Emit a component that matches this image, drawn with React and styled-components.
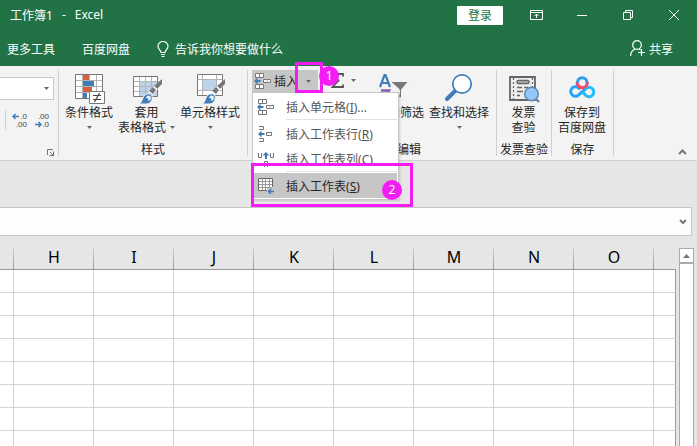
import React, { useState } from "react";
import styled, { createGlobalStyle, css } from "styled-components";

const green = "#217346";
const grey = "#777777";
const blue = "#3f7cb8";
const pink = "#f31cf3";

const COLUMNS = ["H", "I", "J", "K", "L", "M", "N", "O"];
const ROWS = [1, 2, 3, 4, 5, 6, 7, 8];

const GlobalStyle = createGlobalStyle`
  * {
    box-sizing: border-box;
  }
  body {
    margin: 0;
    overflow: hidden;
    font-family: "Noto Sans", "Noto Sans CJK SC", sans-serif;
    font-size: 12px;
  }
  button, select {
    margin: 0;
    padding: 0;
    border: none;
    background: none;
    color: inherit;
    font: inherit;
  }
  svg {
    display: block;
    flex: none;
  }
`;

/* ---------- icons ---------- */

const Arrow = () => (
  <svg width="5" height="3" viewBox="0 0 5 3" aria-hidden="true">
    <path d="M0 0h5L2.500 3z" fill="#666" />
  </svg>
);

const BulbIcon = () => (
  <svg width="12" height="16" viewBox="0 0 12 16" fill="none" stroke="#fff">
    <path d="M4 11.500C4 9 1 8.500 1 5.300a5 4.800 0 0 1 10 0C11 8.500 8 9 8 11.500z" strokeWidth="1.200" />
    <path d="M4 13.500h4M4.500 15.500h3" />
  </svg>
);

const ShareIcon = () => (
  <svg width="16" height="17" viewBox="0 0 16 17" fill="none" stroke="#fff" strokeWidth="1.200">
    <circle cx="7" cy="5" r="4.300" />
    <path d="M.6 16c0-3.500 1.700-5.700 4.400-6.700M9 9l1.500 1" />
    <path d="M8 12.500h7M11.500 9v7" />
  </svg>
);

const RibbonModeIcon = () => (
  <svg width="13" height="10" viewBox="0 0 13 10" fill="none" stroke="#fff">
    <path d="M.5.5h12v9H.5zM1 2.500h11M6.500 8V4M4.500 6l2-2 2 2" />
  </svg>
);

const MinimizeIcon = () => (
  <svg width="10" height="10" viewBox="0 0 10 10" stroke="#fff">
    <path d="M0 5.500h10" />
  </svg>
);

const RestoreIcon = () => (
  <svg width="10" height="10" viewBox="0 0 10 10" fill="none" stroke="#fff">
    <path d="M.5 2.500h7v7h-7zM2.500 2.500v-2h7v7h-2" />
  </svg>
);

const CloseIcon = () => (
  <svg width="10" height="10" viewBox="0 0 10 10" stroke="#fff">
    <path d="M0 0l10 10M10 0L0 10" />
  </svg>
);

const LeftArrow = ({ x, y }) => (
  <path d={`M${x} ${y}l3.500-3.500v2.500h3v2h-3v2.500z`} fill={blue} stroke="none" />
);

const DecimalIcon = ({ decrease }) => (
  <svg width="16" height="18" viewBox="0 0 16 18">
    <g fill="#444" fontFamily="Liberation Sans" fontSize="8" textAnchor="end">
      <text x="15" y="8">{decrease ? ".00" : ".0"}</text>
      <text x="15" y="16">{decrease ? ".0" : ".00"}</text>
    </g>
    {decrease ? (
      <path d="M1 13.500h6M4.500 11l2.500 2.500L4.500 16" fill="none" stroke={blue} strokeWidth="1.500" />
    ) : (
      <path d="M7 5.500H1M3.500 3L1 5.500 3.500 8" fill="none" stroke={blue} strokeWidth="1.500" />
    )}
  </svg>
);

const LauncherIcon = () => (
  <svg width="7" height="7" viewBox="0 0 7 7" fill="none" stroke={grey}>
    <path d="M.5 6V.5H6M3 3l3 3M6.500 2.500v4h-4" />
    <path d="M7 4v3H4z" fill={grey} stroke="none" />
  </svg>
);

const ConditionalIcon = () => (
  <svg width="32" height="32" viewBox="0 0 32 32">
    <path d="M2.500 1.500h27v24h-27z" fill="#fff" />
    <path d="M2 7.500h28M2 13.500h28M2 19.500h28M9.500 1v25M16.500 1v25M23.500 1v25" stroke="#b3b3b3" />
    <path d="M2.500 1.500h27v24h-27z" fill="none" stroke={grey} />
    <path d="M10 2h6v5h-6zM10 14h9v5h-9z" fill="#d9603f" />
    <path d="M10 8h11v5H10zM10 20h4v5h-4z" fill={blue} />
    <path d="M16.500 18.500h15v12h-15z" fill="#fff" stroke={grey} />
    <path d="M20 22.500h8M20 26.500h8M26.500 20l-5 9" stroke="#444" strokeWidth="1.200" />
  </svg>
);

const Brush = () => (
  <g>
    <path d="M31 6v5l-9 11-5-3z" fill="#fff" />
    <path d="M31 6v5l-5 5-3-3z" fill={grey} />
    <path d="M22 14l3 3-3 4-4-3z" fill={grey} />
    <path d="M23 13l3 3" stroke="#ddd" fill="none" />
    <path d="M8 31c3-1 3-5 5-8 2-3 7-3 8 0 1 5-2 8-6 8z" fill={blue} stroke="#f3f3f3" strokeWidth="1" />
    <path d="M16 23c2-1 4 0 4 2s-2 3-3 3c1-2 0-3-2-3z" fill="#eaf2fa" />
  </g>
);

const TableStyleIcon = () => (
  <svg width="32" height="32" viewBox="0 0 32 32">
    <path d="M2.500 3.500h24v20h-24z" fill="#fff" />
    <path d="M9 9h17v14H9z" fill="#bdd3eb" />
    <path d="M3 8.500h24M3 13.500h24M3 18.500h24M8.500 4v20M14.500 4v20M20.500 4v20" stroke="#b3b3b3" />
    <path d="M2.500 3.500h24v20h-24z" fill="none" stroke={grey} />
    <Brush />
  </svg>
);

const CellStyleIcon = () => (
  <svg width="32" height="32" viewBox="0 0 32 32">
    <path d="M3.500 1.500h25v21h-25z" fill="#fff" stroke={grey} />
    <path d="M4 6.500h24M4 17.500h24M8.500 2v20M22.500 2v20" stroke="#b3b3b3" />
    <path d="M9 7h13v10H9z" fill="#bdd3eb" />
    <Brush />
  </svg>
);

const InsertCellsIcon = () => (
  <svg width="18" height="16" viewBox="0 0 18 16">
    <g fill="#fff" stroke={grey}>
      <path d="M1.500.5h8v4h-8zM5.500 1v3" />
      <path d="M1.500 11.500h8v4h-8zM5.500 12v3" />
      <path d="M9.500 6.500h7v3h-7z" />
      <path d="M13 6.500v3" stroke="#aaa" />
    </g>
    <LeftArrow x={0} y={8} />
  </svg>
);

const InsertRowIcon = () => (
  <svg width="18" height="16" viewBox="0 0 18 16" fill="none" stroke={grey}>
    <path d="M2 .5h4.500v3H2M2 15.500h4.500v-3H2M9.500 6.500h5v3h-5z" />
    <LeftArrow x={1} y={8} />
  </svg>
);

const InsertColumnIcon = () => (
  <svg width="18" height="16" viewBox="0 0 18 16" fill="none" stroke={grey}>
    <path d="M1.500 2v4.500h3V2M13.500 2v4.500h3V2M7.500 16v-5.500h3V16" />
    <path d="M9 1l3.500 3.500H10V8H8V4.500H5.500z" fill={blue} stroke="none" />
  </svg>
);

const InsertSheetIcon = () => (
  <svg width="18" height="16" viewBox="0 0 18 16" fill="none">
    <path d="M1.500.5h14v12h-14z" fill="#fff" />
    <path d="M2 3.500h13M2 6.500h13M2 9.500h13M5.500 1v11M8.500 1v11M12.500 1v11" stroke="#999" />
    <path d="M15.500 9V.5h-14v12H10" stroke="#666" />
    <path d="M10 10h8v6h-8z" fill="#c6c6c6" />
    <path d="M17 13.500h-5M14 11l-2.500 2.500L14 16" stroke={blue} strokeWidth="1.500" />
  </svg>
);

const SigmaIcon = () => (
  <svg width="13" height="15" viewBox="0 0 13 15" fill="none" stroke="#555" strokeWidth="1.800">
    <path d="M12 3.500V1H1.500l6 6.500-6 6.500H12v-2.500" />
  </svg>
);

const SortFilterIcon = () => (
  <svg width="32" height="32" viewBox="0 0 32 32">
    <path d="M2 14L6.500 2h1L12 14M4 10h6" fill="none" stroke={blue} strokeWidth="2.200" />
    <path d="M3 17.500h8L3.500 28H12" fill="none" stroke="#8e5bb5" strokeWidth="2.500" />
    <path d="M12.500 8.500h18l-7 8v9l-3-2v-7z" fill={grey} stroke="#f3f3f3" />
    <path d="M15 10.500l6.500 6v6" fill="none" stroke="#ddd" />
  </svg>
);

const FindIcon = () => (
  <svg width="32" height="32" viewBox="0 0 32 32" fill="none" stroke={blue}>
    <path d="M12 18L4 26" strokeWidth="4" strokeLinecap="round" />
    <circle cx="19" cy="11" r="9.200" fill="#fff" strokeWidth="1.700" />
  </svg>
);

const InvoiceIcon = () => (
  <svg width="32" height="32" viewBox="0 0 32 32" fill="none" stroke="#666">
    <path d="M2 4h25v23H2z" fill="#eee" strokeWidth="1.800" />
    <path d="M5.500 5v21M24.500 5v9" strokeDasharray="2 2" strokeWidth="1.200" />
    <rect x="9" y="7.500" width="12" height="3" rx="1.500" fill="#bbb" strokeWidth="1.500" />
    <path d="M9 14.500h5M16 14.500h4M9 18.500h6M9 22.500h3" strokeWidth="1.300" />
    <path d="M27 25l4 4" stroke="#527a9d" strokeWidth="2.200" />
    <circle cx="23.500" cy="21" r="6.800" fill="#90c8f8" stroke="#6685a0" strokeWidth="1.500" />
  </svg>
);

const NetdiskIcon = () => (
  <svg width="32" height="32" viewBox="0 0 32 32" fill="none" strokeWidth="3" strokeLinecap="round">
    <path d="M11.500 9.500a4.700 4.700 0 0 1 9.400 0" stroke="#2b9cf2" />
    <path d="M13 15.500a4.700 4.700 0 1 0-.5 6.600L20 15.500" stroke="#22a5f7" />
    <path d="M20 15.500a4.700 4.700 0 1 1-.5 6.600l-2.500-2.500" stroke="#24bdfb" />
    <path d="M11 9.500a5.200 5.200 0 0 0 10.400 0" stroke="#f5486a" strokeLinecap="butt" />
  </svg>
);

const CollapseIcon = () => (
  <svg width="9" height="6" viewBox="0 0 9 6" fill="none" stroke={grey} strokeWidth="2">
    <path d="M1 5l3.500-3.500L8 5" />
  </svg>
);

const ExpandIcon = () => (
  <svg width="8" height="6" viewBox="0 0 8 6" fill="none" stroke={grey} strokeWidth="2">
    <path d="M1 1l3 3 3-3" />
  </svg>
);

const ScrollUpIcon = () => (
  <svg width="7" height="4" viewBox="0 0 7 4">
    <path d="M0 4h7L3.500 0z" fill={grey} />
  </svg>
);

/* ---------- ribbon pieces ---------- */

const BigButton = ({ icon, lines, arrow }) => (
  <BigButtonWrapper>
    {icon}
    {lines.map((line, i) => (
      <ButtonLine key={line}>
        {line}
        {arrow === "inline" && i === lines.length - 1 && <Arrow />}
      </ButtonLine>
    ))}
    {arrow === "below" && (
      <ButtonLine>
        <Arrow />
      </ButtonLine>
    )}
  </BigButtonWrapper>
);

const MenuItem = ({ icon, text, hotkey, suffix, active, children }) => (
  <MenuRow role="menuitem" $active={active}>
    {icon}
    <span>
      {text}(<u>{hotkey}</u>){suffix}
    </span>
    {children}
  </MenuRow>
);

const InsertMenu = () => (
  <MenuWrapper role="menu">
    <MenuItem icon={<InsertCellsIcon />} text="插入单元格" hotkey="I" suffix="..." />
    <MenuDivider />
    <MenuItem icon={<InsertRowIcon />} text="插入工作表行" hotkey="R" />
    <MenuItem icon={<InsertColumnIcon />} text="插入工作表列" hotkey="C" />
    <MenuDivider />
    <MenuItem icon={<InsertSheetIcon />} text="插入工作表" hotkey="S" active>
      <SheetFrame>
        <SheetStep>2</SheetStep>
      </SheetFrame>
    </MenuItem>
  </MenuWrapper>
);

const App = () => {
  const [menuOpen, setMenuOpen] = useState(true);

  return (
    <Window>
      <GlobalStyle />
      <TitleBar>
        <Title>
          <span>工作簿1</span>
          <span>-</span>
          <span>Excel</span>
        </Title>
        <LoginButton>登录</LoginButton>
        <WindowButton aria-label="功能区显示选项"><RibbonModeIcon /></WindowButton>
        <WindowButton aria-label="最小化"><MinimizeIcon /></WindowButton>
        <WindowButton aria-label="还原"><RestoreIcon /></WindowButton>
        <WindowButton aria-label="关闭"><CloseIcon /></WindowButton>
      </TitleBar>

      <TabBar>
        <Tab>更多工具</Tab>
        <Tab>百度网盘</Tab>
        <TellMe><BulbIcon />告诉我你想要做什么</TellMe>
        <ShareButton><ShareIcon />共享</ShareButton>
      </TabBar>

      <Ribbon>
        <Group>
          <NumberTools>
            <FormatBox>
              <FormatSelect aria-label="数字格式">
                <option value="" />
              </FormatSelect>
              <FormatArrow><Arrow /></FormatArrow>
            </FormatBox>
            <DecimalTools>
              <button aria-label="增加小数位数"><DecimalIcon /></button>
              <button aria-label="减少小数位数"><DecimalIcon decrease /></button>
            </DecimalTools>
          </NumberTools>
          <Launcher aria-label="数字设置"><LauncherIcon /></Launcher>
        </Group>

        <Group>
          <Tools>
            <BigButton icon={<ConditionalIcon />} lines={["条件格式"]} arrow="below" />
            <BigButton icon={<TableStyleIcon />} lines={["套用", "表格格式"]} arrow="inline" />
            <BigButton icon={<CellStyleIcon />} lines={["单元格样式"]} arrow="below" />
          </Tools>
          <GroupLabel>样式</GroupLabel>
        </Group>

        <Group>
          <InsertWrapper>
            <InsertButton>
              <InsertCellsIcon />
              插入
            </InsertButton>
            <InsertArrow aria-label="插入选项" onClick={() => setMenuOpen(!menuOpen)}>
              <Arrow />
              <ArrowFrame />
            </InsertArrow>
            <ArrowStep>1</ArrowStep>
            {menuOpen && <InsertMenu />}
          </InsertWrapper>
        </Group>

        <Group>
          <EditTools>
            <SumButton aria-label="求和"><SigmaIcon /><Arrow /></SumButton>
            <BigButton icon={<SortFilterIcon />} lines={["排序和筛选"]} arrow="below" />
            <BigButton icon={<FindIcon />} lines={["查找和选择"]} arrow="below" />
          </EditTools>
          <GroupLabel>编辑</GroupLabel>
        </Group>

        <Group>
          <Tools>
            <BigButton icon={<InvoiceIcon />} lines={["发票", "查验"]} />
          </Tools>
          <GroupLabel>发票查验</GroupLabel>
        </Group>

        <Group>
          <Tools>
            <BigButton icon={<NetdiskIcon />} lines={["保存到", "百度网盘"]} />
          </Tools>
          <GroupLabel>保存</GroupLabel>
        </Group>
        <CollapseButton aria-label="折叠功能区"><CollapseIcon /></CollapseButton>
      </Ribbon>

      <FormulaBar>
        <FormulaInput aria-label="编辑栏" />
        <ExpandButton aria-label="展开编辑栏"><ExpandIcon /></ExpandButton>
      </FormulaBar>

      <SheetArea>
        <SheetClip>
          <Sheet>
            <thead>
              <tr>
                <HeadCell $width="14px" />
                {COLUMNS.map((name) => (
                  <HeadCell key={name} $width="80px">{name}</HeadCell>
                ))}
                <HeadCell $last />
              </tr>
            </thead>
            <tbody>
              {ROWS.map((row) => (
                <tr key={row}>
                  <Cell />
                  {COLUMNS.map((name) => (
                    <Cell key={name} />
                  ))}
                  <Cell $last />
                </tr>
              ))}
            </tbody>
          </Sheet>
        </SheetClip>
        <ScrollBar>
          <ScrollUp aria-label="向上滚动"><ScrollUpIcon /></ScrollUp>
          <ScrollThumb />
        </ScrollBar>
      </SheetArea>
    </Window>
  );
};

const Window = styled.div`
  display: flex;
  flex-direction: column;
  height: 100vh;
  overflow: hidden;
  background: #e6e6e6;
  color: #262626;
`;

const TitleBar = styled.header`
  display: flex;
  align-items: center;
  height: 30px;
  background: ${green};
  color: white;
`;

const Title = styled.div`
  display: flex;
  flex: 1;
  gap: 9px;
  padding-left: 10px;
`;

const LoginButton = styled.button`
  width: 46px;
  height: 19px;
  margin-right: 10px;
  border-radius: 1px;
  background: white;
  color: ${green};
  line-height: 19px;
`;

const WindowButton = styled.button`
  display: flex;
  align-items: center;
  justify-content: center;
  width: 46px;
  height: 30px;
`;

const TabBar = styled.nav`
  display: flex;
  align-items: center;
  gap: 27px;
  height: 36px;
  padding: 1px 24px 0 7px;
  background: ${green};
  color: white;
`;

const Tab = styled.button``;

const TellMe = styled.button`
  display: flex;
  align-items: center;
  gap: 6px;
`;

const ShareButton = styled.button`
  display: flex;
  align-items: center;
  gap: 3px;
  margin-left: auto;
`;

const Ribbon = styled.div`
  display: flex;
  padding: 4px 0;
  border-bottom: 1px solid #d0d0d0;
  background: #f3f3f3;
`;

const Group = styled.section`
  display: flex;
  flex-direction: column;
  height: 86px;
  border-right: 1px solid #d0d0d0;
`;

const GroupLabel = styled.div`
  margin-top: auto;
  padding: 0 3px;
  line-height: 13px;
  text-align: center;
`;

const Tools = styled.div`
  display: flex;
  justify-content: center;
  gap: 5px;
  padding: 3px 7px 0 6px;
`;

const BigButtonWrapper = styled.button`
  display: flex;
  flex-direction: column;
  align-items: center;
`;

const ButtonLine = styled.span`
  display: flex;
  align-items: center;
  justify-content: center;
  gap: 4px;
  height: 15px;
  line-height: 15px;
  white-space: nowrap;
`;

const NumberTools = styled.div`
  display: flex;
  flex-direction: column;
  gap: 10px;
  padding-top: 7px;
`;

const FormatBox = styled.div`
  position: relative;
  width: 54px;
  margin-right: 4px;
`;

const FormatSelect = styled.select`
  display: block;
  width: 100%;
  height: 23px;
  appearance: none;
  border: 1px solid #c6c6c6;
  border-left: none;
  background: white;
`;

const FormatArrow = styled.span`
  position: absolute;
  top: 10px;
  right: 5px;
  pointer-events: none;
`;

const DecimalTools = styled.div`
  display: flex;
  gap: 6px;
  height: 20px;
  margin-left: 5px;
  padding-left: 6px;
  border-left: 1px solid #d0d0d0;
`;

const Launcher = styled.button`
  align-self: flex-end;
  margin: auto 4px 0 0;
`;

const InsertWrapper = styled.div`
  position: relative;
  display: flex;
  height: 22px;
  margin: 0 3px 0 4px;
  background: #c6c6c6;
`;

const InsertButton = styled.button`
  display: flex;
  align-items: center;
  gap: 2px;
  padding-left: 2px;
  white-space: nowrap;
`;

const InsertArrow = styled.button`
  position: relative;
  display: flex;
  align-items: center;
  justify-content: center;
  width: 20px;
`;

const callout = css`
  position: absolute;
  z-index: 3;
  pointer-events: none;
`;

const Frame = styled.span`
  ${callout}
  border: 3px solid ${pink};
`;

const ArrowFrame = styled(Frame)`
  top: -8px;
  right: -5px;
  width: 28px;
  height: 31px;
`;

const SheetFrame = styled(Frame)`
  top: -10px;
  left: -3px;
  width: 162px;
  height: 44px;
`;

const Step = styled.span`
  ${callout}
  width: 20px;
  height: 20px;
  border-radius: 50%;
  background: ${pink};
  color: white;
  line-height: 20px;
  text-align: center;
`;

const ArrowStep = styled(Step)`
  top: -4px;
  right: -21px;
`;

const SheetStep = styled(Step)`
  right: 8px;
  bottom: 4px;
`;

const MenuWrapper = styled.div`
  position: absolute;
  z-index: 2;
  top: 22px;
  left: 0;
  width: 147px;
  padding: 1px;
  border: 1px solid #c6c6c6;
  background: white;
  box-shadow: 1px 1px 2px rgba(0, 0, 0, 0.15);
`;

const MenuRow = styled.button`
  position: relative;
  display: flex;
  align-items: center;
  gap: 11px;
  width: 100%;
  height: 25px;
  padding-left: 3px;
  background: ${({ $active }) => ($active ? "#c6c6c6" : "white")};
  color: ${({ $active }) => ($active ? "#262626" : "#555555")};
  white-space: nowrap;
`;

const MenuDivider = styled.div`
  height: 1px;
  margin: 0 0 1px 32px;
  background: #e1e1e1;
`;

const EditTools = styled(Tools)`
  padding-left: 9px;
`;

const SumButton = styled.button`
  display: flex;
  align-items: center;
  align-self: flex-start;
  gap: 7px;
  height: 15px;
  margin-right: 3px;
`;

const CollapseButton = styled.button`
  align-self: flex-end;
  margin-left: auto;
  padding: 0 10px 1px 0;
`;

const FormulaBar = styled.div`
  display: flex;
  height: 29px;
  margin: 46px 5px 0 0;
  border: 1px solid #c6c6c6;
  border-left: none;
  background: #fdfdfd;
`;

const FormulaInput = styled.input`
  flex: 1;
  min-width: 0;
  border: none;
  background: none;
`;

const ExpandButton = styled.button`
  padding-right: 4px;
`;

const SheetArea = styled.main`
  display: flex;
  flex: 1;
  gap: 3px;
  min-height: 0;
  padding-right: 3px;
`;

const SheetClip = styled.div`
  flex: 1;
  min-width: 0;
  overflow: hidden;
`;

const Sheet = styled.table`
  width: 100%;
  table-layout: fixed;
  border-spacing: 0;
`;

const HeadCell = styled.th`
  width: ${({ $width }) => $width || "auto"};
  height: 34px;
  padding: 8px 0 0;
  border-bottom: 1px solid #999999;
  background: ${({ $last }) =>
    $last
      ? "none"
      : "linear-gradient(#d8d8d8, #999999) right bottom / 1px 23px no-repeat"};
  color: black;
  font-size: 16px;
  font-weight: 400;
  line-height: 24px;
`;

const Cell = styled.td`
  height: 23px;
  padding: 0;
  border-right: 1px solid ${({ $last }) => ($last ? "#999999" : "#d4d4d4")};
  border-bottom: 1px solid #d4d4d4;
  background: white;
`;

const ScrollBar = styled.div`
  display: flex;
  flex-direction: column;
  width: 15px;
  padding-top: 12px;
`;

const ScrollUp = styled.button`
  display: flex;
  align-items: center;
  justify-content: center;
  height: 15px;
  border: 1px solid #ababab;
  background: white;
`;

const ScrollThumb = styled.div`
  flex: 1;
  border: 1px solid #ababab;
  border-bottom: none;
  background: white;
`;

export default App;
